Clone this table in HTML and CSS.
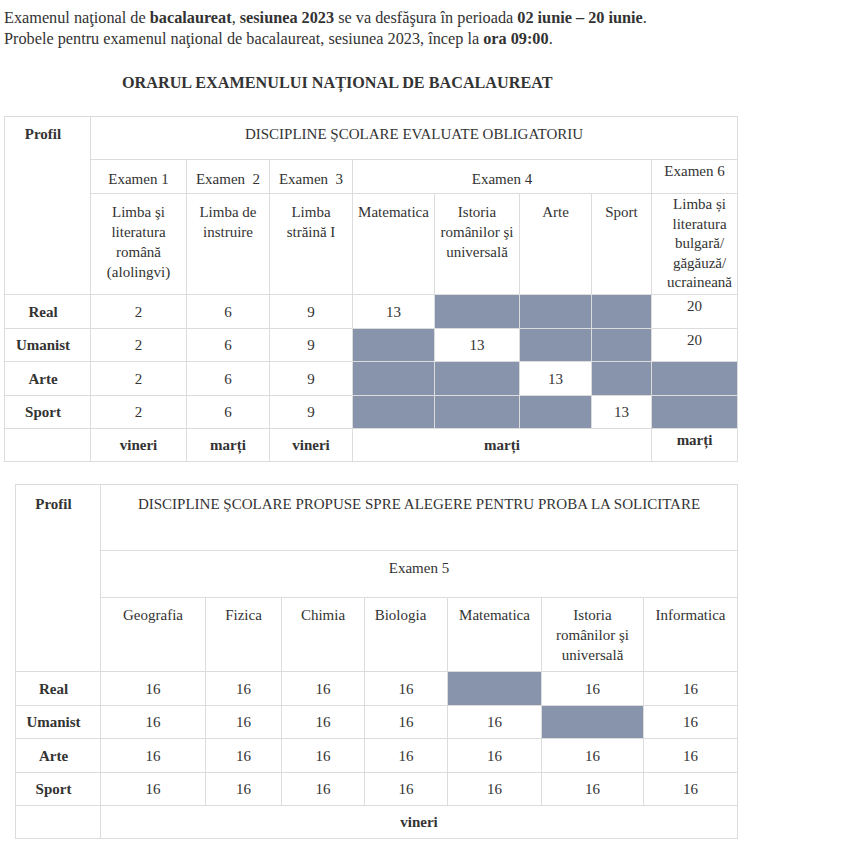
FILE: index.html
```html
<!DOCTYPE html>
<html lang="ro">
<head>
<meta charset="utf-8">
<title>Orarul examenului național de bacalaureat</title>
<link rel="stylesheet" href="styles.css">
</head>
<body>
<p class="intro">Examenul naţional de <b>bacalaureat</b>, <b>sesiunea 2023</b> se va desfăşura în perioada <b>02 iunie – 20 iunie</b>.<br>Probele pentru examenul naţional de bacalaureat, sesiunea 2023, încep la <b>ora 09:00</b>.</p>
<h2 class="title">ORARUL EXAMENULUI NAȚIONAL DE BACALAUREAT</h2>

<table class="sched sched-1">
  <colgroup>
    <col class="w86"><col class="w96"><col class="w83"><col class="w83"><col class="w82"><col class="w85"><col class="w72"><col class="w60"><col class="w86">
  </colgroup>
  <tr class="h43">
    <td class="head bold prof" rowspan="3">Profil</td>
    <td class="head" colspan="8">DISCIPLINE ŞCOLARE EVALUATE OBLIGATORIU</td>
  </tr>
  <tr class="h34 exam-row">
    <td class="head">Examen 1</td>
    <td class="head">Examen&nbsp; 2</td>
    <td class="head">Examen&nbsp; 3</td>
    <td class="head" colspan="4">Examen 4</td>
    <td class="head tight">Examen 6</td>
  </tr>
  <tr class="h101 subj-row">
    <td class="head">Limba şi literatura română (alolingvi)</td>
    <td class="head">Limba de instruire</td>
    <td class="head">Limba străină I</td>
    <td class="head">Matematica</td>
    <td class="head">Istoria românilor şi universală</td>
    <td class="head">Arte</td>
    <td class="head">Sport</td>
    <td class="head tight shift">Limba și literatura bulgară/ găgăuză/ ucraineană</td>
  </tr>
  <tr class="h34">
    <td class="bold prof">Real</td><td>2</td><td>6</td><td>9</td><td>13</td><td class="off"></td><td class="off"></td><td class="off"></td><td class="top">20</td>
  </tr>
  <tr class="h33">
    <td class="bold prof">Umanist</td><td>2</td><td>6</td><td>9</td><td class="off"></td><td>13</td><td class="off"></td><td class="off"></td><td class="top">20</td>
  </tr>
  <tr class="h34">
    <td class="bold prof">Arte</td><td>2</td><td>6</td><td>9</td><td class="off"></td><td class="off"></td><td>13</td><td class="off"></td><td class="off"></td>
  </tr>
  <tr class="h33">
    <td class="bold prof">Sport</td><td>2</td><td>6</td><td>9</td><td class="off"></td><td class="off"></td><td class="off"></td><td>13</td><td class="off"></td>
  </tr>
  <tr class="h33">
    <td class="prof"></td><td class="bold">vineri</td><td class="bold">marți</td><td class="bold">vineri</td><td class="bold" colspan="4">marți</td><td class="bold top">marți</td>
  </tr>
</table>

<table class="sched sched-2">
  <colgroup>
    <col class="w85"><col class="w105"><col class="w76"><col class="w83"><col class="w83"><col class="w94"><col class="w102"><col class="w94">
  </colgroup>
  <tr class="h66 first-row">
    <td class="head bold prof" rowspan="3">Profil</td>
    <td class="head" colspan="7">DISCIPLINE ŞCOLARE PROPUSE SPRE ALEGERE PENTRU PROBA LA SOLICITARE</td>
  </tr>
  <tr class="h47">
    <td class="head" colspan="7">Examen 5</td>
  </tr>
  <tr class="h74">
    <td class="head">Geografia</td>
    <td class="head">Fizica</td>
    <td class="head">Chimia</td>
    <td class="head bio">Biologia</td>
    <td class="head">Matematica</td>
    <td class="head">Istoria românilor şi universală</td>
    <td class="head">Informatica</td>
  </tr>
  <tr class="h34">
    <td class="bold prof">Real</td><td>16</td><td>16</td><td>16</td><td>16</td><td class="off"></td><td>16</td><td>16</td>
  </tr>
  <tr class="h33">
    <td class="bold prof">Umanist</td><td>16</td><td>16</td><td>16</td><td>16</td><td>16</td><td class="off"></td><td>16</td>
  </tr>
  <tr class="h34">
    <td class="bold prof">Arte</td><td>16</td><td>16</td><td>16</td><td>16</td><td>16</td><td>16</td><td>16</td>
  </tr>
  <tr class="h33">
    <td class="bold prof">Sport</td><td>16</td><td>16</td><td>16</td><td>16</td><td>16</td><td>16</td><td>16</td>
  </tr>
  <tr class="h33">
    <td class="prof"></td><td class="bold" colspan="7">vineri</td>
  </tr>
</table>
</body>
</html>
```

FILE: styles.css
```css
html, body {
  margin: 0;
  padding: 0;
  background: #fff;
}

body {
  padding: 8px 4px 0 4px;
  font-family: "Liberation Serif", "Times New Roman", serif;
  font-size: 16.25px;
  color: #333;
}

.intro {
  margin: 0;
  line-height: 21px;
}

.title {
  margin: 23px 0 0 0;
  padding-left: 118px;
  font-size: 16.2px;
  line-height: 21px;
  font-weight: bold;
}

.sched {
  border-collapse: collapse;
  table-layout: fixed;
  font-size: 15px;
  line-height: 20px;
  color: #333;
}

.sched-1 {
  width: 733px;
  margin-top: 22px;
}

.sched-2 {
  width: 722px;
  margin-top: 22px;
  margin-left: 11px;
}

.sched td {
  border: 1px solid #dcdcdc;
  padding: 0 3px;
  text-align: center;
  vertical-align: middle;
}

.sched td.head {
  vertical-align: top;
  padding-top: 7px;
}

.sched .exam-row td.head {
  padding-top: 9px;
}

.sched .subj-row td.head {
  padding-top: 8px;
}

.sched .first-row td.head {
  padding-top: 9px;
}

.sched td.tight,
.sched td.top,
.sched .exam-row td.tight,
.sched .subj-row td.tight {
  vertical-align: top;
  padding-top: 1px;
}

.sched .subj-row td.shift {
  padding-top: 1px;
  padding-bottom: 0;
  padding-left: 10px;
  padding-right: 0;
  line-height: 19.6px;
}

.sched td.prof {
  padding-left: 0;
  padding-right: 9px;
}

.sched td.bio {
  padding-right: 14px;
}

.sched td.off {
  background: #8894ac;
}

.sched td.bold {
  font-weight: bold;
}

.w60 { width: 60px; }
.w72 { width: 72px; }
.w76 { width: 76px; }
.w82 { width: 82px; }
.w83 { width: 83px; }
.w85 { width: 85px; }
.w86 { width: 86px; }
.w94 { width: 94px; }
.w96 { width: 96px; }
.w102 { width: 102px; }
.w105 { width: 105px; }

.h33 { height: 33px; }
.h34 { height: 34px; }
.h43 { height: 43px; }
.h47 { height: 47px; }
.h66 { height: 66px; }
.h74 { height: 74px; }
.h101 { height: 101px; }
```
